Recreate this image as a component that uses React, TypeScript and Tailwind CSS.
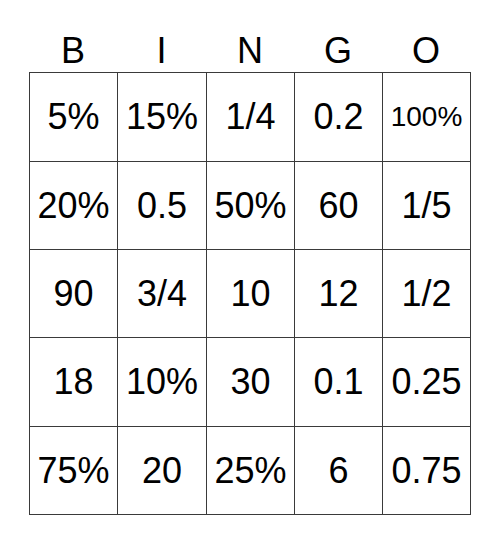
const letters = ["B", "I", "N", "G", "O"];

const cells = [
  ["5%", "15%", "1/4", "0.2", "100%"],
  ["20%", "0.5", "50%", "60", "1/5"],
  ["90", "3/4", "10", "12", "1/2"],
  ["18", "10%", "30", "0.1", "0.25"],
  ["75%", "20", "25%", "6", "0.75"],
];

export default function App() {
  return (
    <div className="w-[500px] h-[544px] bg-white pt-[33px] pl-[29px] font-['Liberation_Sans',Arial,sans-serif] text-black">
      <div className="grid grid-cols-[88px_89px_88px_88px_88px] w-[441px] h-[39px]">
        {letters.map((l) => (
          <div key={l} className="text-[36px] leading-none text-center">
            {l}
          </div>
        ))}
      </div>
      <div className="grid grid-cols-[87px_88px_87px_87px_87px] grid-rows-[88px_87px_87px_88px_87px] gap-px p-px bg-[#3a3a3a] w-[442px]">
        {cells.flat().map((c, i) => (
          <div
            key={i}
            className={
              "bg-white flex items-center justify-center leading-none " +
              (c.length > 3 && c.includes("%") ? "text-[28px]" : "text-[36px]")
            }
          >
            {c}
          </div>
        ))}
      </div>
    </div>
  );
}
